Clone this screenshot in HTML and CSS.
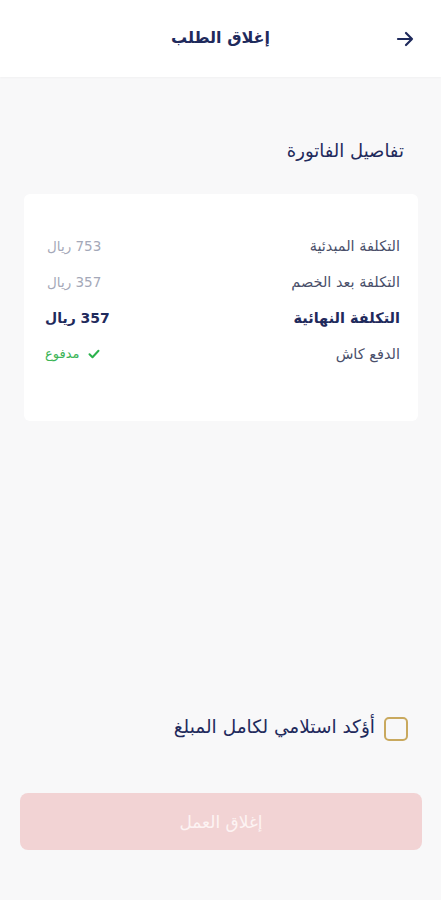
FILE: index.html
```html
<!DOCTYPE html>
<html lang="ar" dir="rtl">
<head>
    <meta charset="UTF-8">
    <meta name="viewport" content="width=device-width, initial-scale=1.0">
    <title>إغلاق الطلب</title>
    <link rel="stylesheet" href="styles.css">
</head>
<body>

    <header class="topbar">
        <button class="back" aria-label="رجوع">
            <svg width="20" height="20" viewBox="0 0 20 20" fill="none" stroke="#1f2a5c" stroke-width="2.2" stroke-linecap="round" stroke-linejoin="round">
                <path d="M3 10h14M11 4l6 6-6 6"/>
            </svg>
        </button>
        <h1 class="topbar-title">إغلاق الطلب</h1>
    </header>

    <main class="content">
        <h2 class="section-title">تفاصيل الفاتورة</h2>

        <div class="card">
            <div class="row">
                <span class="label">التكلفة المبدئية</span>
                <span class="value">753 ريال</span>
            </div>
            <div class="row">
                <span class="label">التكلفة بعد الخصم</span>
                <span class="value">357 ريال</span>
            </div>
            <div class="row total">
                <span class="label">التكلفة النهائية</span>
                <span class="value">357 ريال</span>
            </div>
            <div class="row">
                <span class="label">الدفع كاش</span>
                <span class="value paid">
                    <svg width="12" height="10" viewBox="0 0 12 10" fill="none" stroke="#2bb24c" stroke-width="2" stroke-linecap="round" stroke-linejoin="round">
                        <path d="M1.5 5.2l3 3 6-6.5"/>
                    </svg>
                    مدفوع
                </span>
            </div>
        </div>

        <div class="spacer"></div>

        <label class="confirm">
            <span class="box"></span>
            <span class="confirm-text">أؤكد استلامي لكامل المبلغ</span>
        </label>

        <button class="submit" disabled>إغلاق العمل</button>
    </main>

</body>
</html>
```

FILE: styles.css
```css
* {
    box-sizing: border-box;
}
body {
    margin: 0;
    font-family: "DejaVu Sans", "Noto Sans", sans-serif;
    background-color: #f8f8f9;
    color: #1f2a5c;
    min-height: 900px;
}
.topbar {
    height: 77px;
    background-color: #ffffff;
    display: flex;
    align-items: center;
    justify-content: center;
    position: relative;
    box-shadow: 0 1px 2px rgba(0, 0, 0, 0.03);
}
.topbar-title {
    margin: 0;
    font-size: 16px;
    font-weight: bold;
    color: #1f2a5c;
    padding-bottom: 3px;
}
.back {
    position: absolute;
    right: 26px;
    top: 29px;
    background: none;
    border: none;
    padding: 0;
    display: flex;
}
.content {
    display: flex;
    flex-direction: column;
    min-height: 823px;
    padding: 0 19px 0 20px;
}
.section-title {
    margin: 63px 18px 0 0;
    font-size: 18px;
    font-weight: normal;
    color: #1f2a5c;
}
.card {
    margin: 33px 4px 0 4px;
    background-color: #ffffff;
    border-radius: 6px;
    padding: 42px 18px 58px 21px;
    display: flex;
    flex-direction: column;
    gap: 17px;
}
.row {
    display: flex;
    justify-content: space-between;
    align-items: center;
    height: 19px;
    font-size: 14.5px;
}
.label {
    color: #4a4f6a;
}
.value {
    color: #a4a8b8;
    font-size: 13.5px;
    white-space: nowrap;
    margin-left: 2px;
}
.total .label {
    color: #1f2a5c;
    font-weight: bold;
}
.total .value {
    color: #1f2a5c;
    font-weight: bold;
    font-size: 14px;
    margin-left: 0;
}
.paid {
    color: #3cb558;
    font-size: 13px;
    display: flex;
    align-items: center;
    gap: 9px;
    margin-left: 0;
}
.spacer {
    flex: 1;
}
.confirm {
    display: flex;
    align-items: center;
    gap: 9px;
    margin: 0 14px 0 0;
}
.box {
    width: 24px;
    height: 24px;
    border: 2px solid #c9a95e;
    border-radius: 5px;
}
.confirm-text {
    font-size: 18.5px;
    color: #1f2a5c;
    padding-bottom: 4px;
}
.submit {
    margin: 52px 0 50px 0;
    height: 57px;
    border: none;
    border-radius: 8px;
    background-color: #f2d3d4;
    color: #fdf3f3;
    font-family: "DejaVu Sans", sans-serif;
    font-size: 17px;
}
```
